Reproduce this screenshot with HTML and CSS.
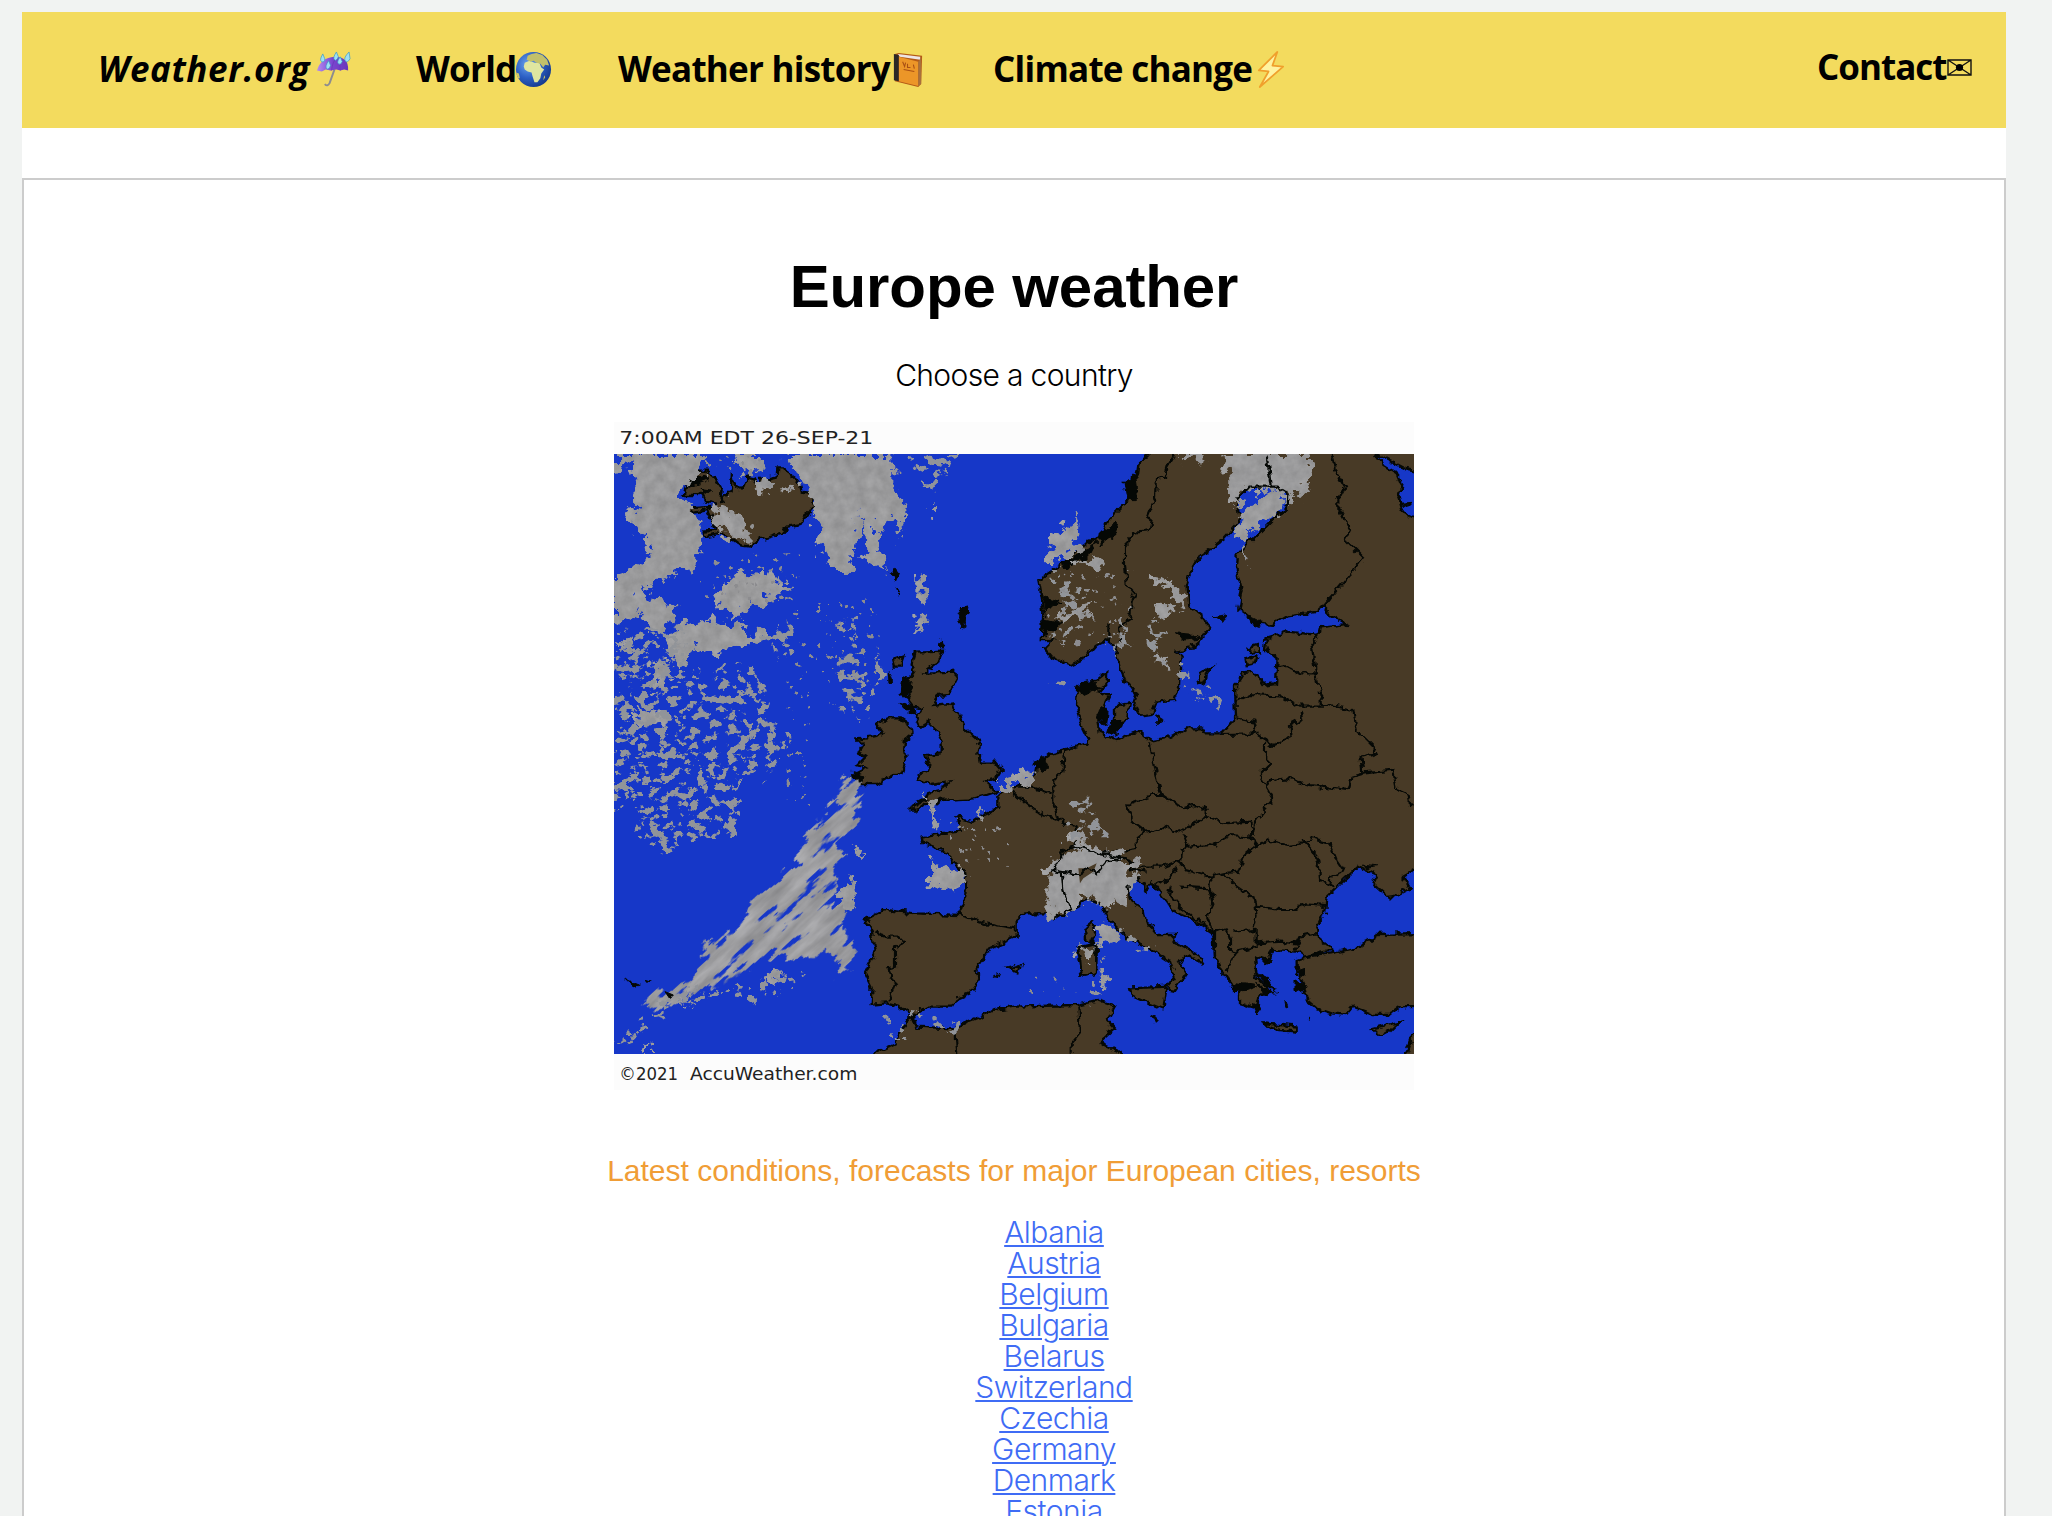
FILE: index.html
```html
<!DOCTYPE html>
<html lang="en">
<head>
<meta charset="utf-8">
<title>Europe weather</title>
<link rel="stylesheet" href="styles.css">
</head>
<body>
<div class="page">
  <nav class="nav">
    <a class="nav-item brand"><span class="t t-brand">Weather.org</span><svg class="emoji" viewBox="0 0 38 38"><defs><linearGradient id="um" x1="0" x2="1"><stop offset="0" stop-color="#b58cf0"/><stop offset=".5" stop-color="#7a45cf"/><stop offset="1" stop-color="#6a35bb"/></linearGradient></defs><path d="M20 19l-5 14q-2 4-5 1" fill="none" stroke="#8c8c90" stroke-width="2"/><path d="M2 20Q6 7 20 6Q35 6 34 20l-4-1-4 1-4-1-6 1-5-1-4 2z" fill="url(#um)"/><path d="M17 20q1-9 5-13 4 4 4 13" fill="none" stroke="#6a38b8" stroke-width=".8"/><g fill="#9fe0f4" stroke="#3799c9" stroke-width=".7"><path d="M8 3q-4 7-1 8t3-3zM22 1q-4 6-2 8t4-3zM14 10q-4 6-2 8t4-3zM26 6q-4 5-2 7t4-2zM35 1q-6 6-4 9t5-2z"/></g></svg></a>
    <a class="nav-item"><span class="t t-world">World</span><svg class="emoji" viewBox="0 0 38 38"><defs><radialGradient id="gl" cx=".35" cy=".35" r=".7"><stop offset="0" stop-color="#6aa5ee"/><stop offset=".55" stop-color="#2c5fc4"/><stop offset="1" stop-color="#163a8e"/></radialGradient></defs><circle cx="19" cy="19" r="18" fill="url(#gl)"/><path d="M9 16l1-4 5-2 5 2 5 0 2 5 3 2-3 4-1 5-3 4-3 0-2-6-1-4-4-1-3-2z" fill="#dfe6a0"/><path d="M12 9l1-4 4-2 5-1 6 2 5 5 2 6-4-1-2 3-3-4-4-1-3-2-3 1z" fill="#c2c06a"/><path d="M1 22l3 1 1 5-2 0zM30 25l1 2-2 3z" fill="#c9c768"/></svg></a>
    <a class="nav-item"><span class="t t-history">Weather history</span><svg class="emoji" viewBox="0 0 38 38"><path d="M5 3l4-1 24 3-1 29-3 3L5 31z" fill="#b35a16"/><path d="M8 3l23 3v3L10 6z" fill="#eee6e4"/><path d="M9 6l20 5v25L9 31z" fill="#ec9628"/><path d="M4 3l5 1v27l-5-1z" fill="#2b2826"/><path d="M29 11l3-4v27l-3 2z" fill="#a8703c"/><path d="M13 11l2 5 1-4m2 1v4h3m3-3l1 4m-11 1l11 2" fill="none" stroke="#a84f14" stroke-width="1.1"/></svg></a>
    <a class="nav-item"><span class="t t-climate">Climate change</span><svg class="emoji" viewBox="0 0 38 38"><path d="M26 1L7 20l10 1L8 37 32 16l-11-1z" fill="#fff3a0" stroke="#f0a02c" stroke-width="1.8" stroke-linejoin="round"/></svg></a>
    <a class="nav-item contact"><span class="t t-contact">Contact</span><svg class="mail" viewBox="0 0 25 17"><path d="M1 1h23v15H1zM1 1l23 15M24 1L1 16" fill="none" stroke="#111" stroke-width="1.4"/><circle cx="12.500" cy="8.500" r="3.600"/></svg></a>
  </nav>
  <main class="card">
    <h1>Europe weather</h1>
    <p class="lead">Choose a country</p>
    <svg class="map" viewBox="42 36 2400 2004" preserveAspectRatio="none">
      <defs>
        <clipPath id="frame"><rect x="42" y="132" width="2400" height="1800"/></clipPath>
        <filter id="rough" filterUnits="userSpaceOnUse" x="0" y="90" width="2490" height="1890"><feTurbulence type="fractalNoise" baseFrequency=".045" numOctaves="2" seed="4"/><feDisplacementMap in="SourceGraphic" scale="26" xChannelSelector="R" yChannelSelector="G"/></filter>
        <filter id="ragged" filterUnits="userSpaceOnUse" x="0" y="90" width="2490" height="1890"><feTurbulence type="fractalNoise" baseFrequency=".03" numOctaves="4" seed="9" result="n"/><feDisplacementMap in="SourceGraphic" in2="n" scale="80" xChannelSelector="R" yChannelSelector="G" result="d"/><feColorMatrix in="n" values=".13 0 0 0 .54 .13 0 0 0 .54 .13 0 0 0 .545 0 0 0 0 1"/><feComposite in2="d" operator="in"/></filter>
        <filter id="streak" filterUnits="userSpaceOnUse" x="-900" y="-900" width="3800" height="3800"><feTurbulence type="fractalNoise" baseFrequency=".008 .035" numOctaves="4" seed="5" result="n"/><feDisplacementMap in="SourceGraphic" in2="n" scale="90" xChannelSelector="R" yChannelSelector="G" result="d"/><feColorMatrix in="n" values=".22 0 0 0 .5 .22 0 0 0 .5 .22 0 0 0 .51 0 16 0 0 -4.900"/><feComposite in2="d" operator="in"/></filter>
        <filter id="speckle" filterUnits="userSpaceOnUse" x="0" y="90" width="2490" height="1890"><feTurbulence type="fractalNoise" baseFrequency=".034 .042" numOctaves="4" seed="12" result="n"/><feTurbulence type="fractalNoise" baseFrequency=".012" numOctaves="3" seed="31" result="w"/><feDisplacementMap in="SourceGraphic" in2="w" scale="150" xChannelSelector="R" yChannelSelector="G" result="d"/><feColorMatrix in="n" values="0 0 0 0 .57 0 0 0 0 .58 0 0 0 0 .6 20 0 0 0 -10.800"/><feComposite in2="d" operator="in"/></filter>
        <filter id="dots" filterUnits="userSpaceOnUse" x="0" y="90" width="2490" height="1890"><feTurbulence type="fractalNoise" baseFrequency=".045" numOctaves="3" seed="23"/><feColorMatrix values="0 0 0 0 .55 0 0 0 0 .55 0 0 0 0 .56 24 0 0 0 -16.800"/><feComposite in2="SourceGraphic" operator="in"/></filter>
      </defs>
      <rect class="band" x="42" y="36" width="2400" height="2004"/>
      <rect class="sea" x="42" y="132" width="2400" height="1800"/>
      <g clip-path="url(#frame)">
        <g class="land" filter="url(#rough)">
          <path d="M250 255L260 225 290 182 320 182 345 205 365 240 360 285 375 255 392 245 395 205 410 230 425 238 440 200 460 205 475 235 480 210 530 200 532 172 552 172 560 190 585 205 600 225 605 245 640 250 645 285 630 300 605 342 560 350 540 372 480 390 455 410 420 405 385 378 355 370 310 380 308 362 345 360 335 330 320 300 262 312 262 295 345 290 345 280 320 275 310 255Z"/>
          <path d="M945 725L1025 722 1010 760 975 788 1070 785 1070 805 1045 855 1010 858 1000 885 1045 880 1080 910 1090 950 1130 985 1140 1010 1135 1030 1140 1055 1185 1055 1205 1080 1190 1105 1155 1115 1190 1145 1160 1155 1120 1165 1020 1170 1000 1185 970 1185 950 1202 935 1202 935 1190 975 1170 985 1145 1030 1135 1050 1115 1000 1125 950 1110 955 1095 980 1080 985 1065 975 1035 1025 1030 1025 995 1005 955 985 935 960 950 948 925 965 895 940 890 925 870 935 850 920 820 940 790 935 760Z"/>
          <path d="M770 985L830 978 850 970 830 940 860 925 900 925 930 945 935 975 915 990 912 1020 918 1050 905 1090 870 1100 830 1125 770 1125 760 1095 800 1075 770 1065 795 1040 775 1030 790 1005Z"/>
          <path d="M1645 100L1645 132 1615 165 1610 200 1580 215 1605 245 1580 275 1530 325 1500 385 1460 400 1380 465 1315 510 1325 560 1330 610 1325 690 1360 690 1335 715 1360 745 1410 765 1455 745 1490 705 1520 690 1545 710 1560 770 1575 810 1608 855 1600 880 1620 920 1655 915 1670 875 1720 870 1740 830 1745 740 1730 722 1775 715 1805 690 1830 650 1810 625 1765 590 1760 530 1775 475 1800 440 1870 390 1920 335 1910 270 1945 230 2030 230 2062 250 2060 300 2020 325 1950 395 1910 440 1908 470 1925 540 1915 600 1970 640 2020 645 2060 620 2150 605 2170 590 2185 610 2240 645 2160 655 2155 675 2065 665 2000 685 1995 715 2030 745 2025 820 1990 825 1965 785 1930 790 1905 830 1908 920 1865 970 1820 970 1810 955 1760 955 1720 980 1650 992 1620 965 1580 975 1550 990 1500 970 1495 930 1530 860 1495 850 1520 820 1522 785 1485 815 1435 825 1430 900 1445 950 1465 990 1460 1000 1395 1020 1355 1030 1310 1065 1305 1090 1280 1115 1235 1135 1195 1155 1195 1195 1150 1215 1120 1235 1070 1222 1080 1265 1020 1270 965 1280 970 1300 1040 1325 1065 1360 1100 1390 1095 1470 1080 1515 950 1510 850 1500 795 1530 815 1560 825 1630 795 1690 815 1730 812 1785 860 1780 900 1790 935 1818 980 1790 1060 1790 1075 1765 1110 1750 1140 1705 1125 1680 1170 1615 1250 1580 1250 1530 1275 1510 1340 1510 1365 1525 1415 1495 1465 1468 1505 1485 1525 1530 1575 1580 1640 1610 1710 1655 1725 1700 1700 1735 1725 1740 1760 1690 1740 1660 1755 1635 1805 1660 1810 1645 1720 1595 1725 1575 1675 1575 1640 1535 1635 1505 1590 1470 1585 1420 1615 1400 1640 1440 1655 1415 1680 1450 1720 1505 1780 1530 1840 1570 1845 1640 1865 1680 1895 1720 1920 1735 1920 1780 1970 1795 1980 1750 2020 1750 1970 1700 1965 1640 2000 1650 2020 1620 2090 1625 2110 1640 2200 1620 2155 1585 2150 1550 2175 1510 2180 1460 2220 1420 2275 1370 2330 1395 2320 1420 2370 1465 2430 1435 2410 1400 2480 1360 2480 100Z"/>
          <path d="M2480 1572L2330 1575 2280 1610 2210 1628 2120 1640 2090 1650 2090 1680 2110 1720 2120 1770 2150 1795 2195 1810 2240 1815 2260 1790 2320 1812 2370 1812 2400 1792 2480 1790Z"/>
          <path d="M800 1960L820 1931 885 1900 905 1860 935 1818 950 1850 1060 1855 1135 1825 1180 1800 1245 1790 1430 1785 1495 1770 1545 1788 1522 1830 1545 1855 1500 1895 1520 1910 1565 1931 1580 1960ZM1590 1735L1700 1730 1690 1795 1640 1775 1595 1755ZM1430 1615L1490 1605 1488 1690 1445 1700 1440 1645ZM1455 1555L1480 1535 1485 1570 1475 1600 1458 1590ZM1995 1840L2040 1845 2090 1850 2090 1865 2040 1860 2000 1850ZM2315 1855L2400 1835 2370 1865 2335 1875ZM1222 1675L1262 1665 1255 1688ZM1545 890L1590 880 1580 930 1545 935ZM1795 795L1835 770 1805 825ZM1940 715L1975 705 1980 725 1950 730ZM1937 748L1970 740 1965 760 1940 765ZM1672 920L1688 930 1672 940ZM880 750L910 740 900 770 885 770ZM2410 1950L2430 1890 2460 1860V1950Z"/>
          <path class="sea" d="M2330 132L2350 165 2390 190 2405 225 2395 260 2410 310 2480 345V190L2415 175Z"/>
        </g>
        <g class="rock" filter="url(#rough)">
          <path d="M868 488l15-10 12 15-8 20zM885 530l14 25-8-5zM1085 600l20-12-8 40-8 24-16-25zM1015 695l12-5 8 20-12 5zM865 785l10 30-8 5zM905 800l30 5-10 60-25-10zM900 880l40 10 10 30-20-10zM255 235l30-30 30-10 5 15-40 15zM300 235l35 5-20 15zM1430 825l30-10 50 15-30 10-35 15zM1500 890l25 10-5 40-30-15zM1530 935l40-5-20 50-30-15zM1330 560l50 15-45 25zM1325 630l60 10-50 35zM1380 460l60-25 50-40-20 40-70 40zM1500 370l50-30-10 35-40 30zM1575 215l25-20 10 70-25 10zM1720 668l60 5 20 12-50 5zM1840 620l38-5-15 22zM1948 620l30 15 5 15-30-10zM1300 1060l30-20 15 30-25 20zM760 1085l30 10 0 30-30-15zM1180 1700l16-10-8 20zM1655 1818l14 5-6 14zM1970 1690l30 15 30 40-30-20zM1975 1640l40 10-20 15zM1970 1720l50 30-20 10zM1900 1720l70 10-20 10-50 5zM2085 1710l40 20-40 15zM2085 1690l30-10 5 15zM2055 1770l8 20-6 5zM1960 1780l25 15-15 20zM1855 1670l14 8-6 14zM1890 1725l20 10-6 10zM2290 1365l40 5-30 5zM2400 280l30-3v14zM80 1710l38 15-15 5zM138 1708l16 5-14 4zM2122 1835l8-15"/>
        </g>
        <g class="border" filter="url(#rough)">
          <path d="M1725 132L1705 165 1695 200 1668 205 1665 260 1640 320 1655 330 1650 360 1605 365 1575 405 1575 470 1580 520 1605 550 1595 575 1590 630 1560 650 1565 705M1525 690L1525 640M2005 132L2012 150 2000 180 2012 225M2195 132L2205 180 2235 230 2215 270 2215 295 2250 360 2235 390 2290 445 2170 590M2155 675L2135 710 2148 790 2165 870 2165 890 2100 890 2050 860 1950 855 1905 875M2148 790L2095 790 2060 765 2030 768M2165 880L2260 900 2270 960 2320 1010 2330 1030 2285 1040 2290 1090 2255 1100 2245 1140 2130 1125 2060 1105 2015 1110 2000 1125M2105 900L2110 925 2070 945 2075 980 2020 1005 1965 970 1860 972M1910 925L1960 935 1970 970M1995 995L1995 1040 2015 1060 1980 1095 2000 1130 2020 1165 1975 1220 1965 1250 1960 1275M2290 1090L2380 1082 2390 1135 2425 1150 2430 1185 2460 1190M1650 1000L1660 1060 1670 1110 1685 1155M1655 1155L1590 1180 1580 1190 1600 1235 1640 1265 1690 1250 1740 1265 1820 1220 1820 1200 1780 1185 1750 1195 1690 1155ZM1820 1220L1850 1230 1870 1240 1950 1235 1960 1255 1950 1280 1890 1275 1840 1305 1765 1310 1750 1270M1950 1280L1970 1305 1930 1340 1915 1385 1870 1390 1830 1400 1760 1380 1740 1350 1745 1315 1765 1310M1640 1265L1610 1290 1610 1320 1530 1330 1430 1310M1740 1350L1690 1370 1615 1370 1575 1345 1520 1370M1970 1305L2000 1290 2060 1305 2110 1300 2140 1285 2190 1300 2210 1350 2230 1380 2195 1395 2190 1430M2110 1290L2155 1345 2160 1410 2200 1430M1735 1370L1705 1410 1660 1425M1870 1390L1910 1430 1940 1450 1960 1460 1970 1490 2040 1500 2080 1500 2120 1480 2175 1485M1735 1430L1830 1435 1840 1480 1820 1520 1840 1570 1880 1555 1890 1590 1890 1620 1910 1625 1970 1610 1970 1560 1900 1565M1715 1430L1710 1455 1750 1500 1810 1540M1965 1470L1970 1520 1960 1555M1970 1600L2040 1595 2090 1600 2100 1580 2150 1570M1910 1625L1880 1680M1845 1570L1845 1640M1830 1400L1835 1460M2100 1590L2085 1620M1395 1020L1390 1080 1360 1110 1360 1180 1375 1230 1430 1255 1430 1300 1390 1325 1360 1380 1385 1400 1440 1395 1460 1370 1490 1390 1520 1355 1580 1345M1235 1145L1300 1200 1350 1220 1375 1230M1240 1130L1290 1130 1355 1150M1585 1345L1590 1375 1640 1385M1080 1515L1160 1540 1245 1555M825 1570L860 1580 900 1580 915 1595 885 1615 885 1670 865 1675 885 1720 865 1775M1065 1855L1072 1931M1435 1790L1440 1870 1415 1900 1415 1931"/>
        </g>
        <g filter="url(#ragged)">
          <path d="M42 132H310L280 200 240 260 300 330 310 400 270 480 200 500 120 540 220 600 215 640 160 665 120 610 42 650V490L130 460 150 410 90 330 110 230 100 160 42 170Z"/>
          <path d="M415 132H490L480 190 420 195ZM560 132H880L880 230 920 300 915 340 870 330 830 340 855 480 800 450 780 310 755 480 690 480 655 370 640 270 600 210ZM420 485L510 490 565 520 560 550 440 590 430 635 390 620 350 585 360 540ZM250 640L350 630 450 670 560 660 470 700 380 725 280 715 240 790 195 710ZM325 300L380 290 440 340 440 395 390 385 345 345ZM450 215l50-15 10 30-25 20zM540 240l40-15 5 15-30 10z"/>
          <path d="M42 690l60 10 20 30-60-20zM150 760l50 10-10 70-30 5zM100 910l100-10 20 40-100 10zM985 300l20 0 0 30-20 0zM955 490l18 0 8 90-26-5zM955 620l18 0-10 60-8 0z"/>
          <path d="M740 1405l25 10-10 90-50-10zM745 1310l50 20-15 15zM480 1700l70-10-20 30zM260 1770l40-5-10 20zM130 1910l30 0v22h-30zM990 1350l70 30 40 10-30 60-80-20zM970 1150l30 20 18 85-15 0-15-60zM1130 1180l15 0 0 50-12 0zM1200 1110l70-30 40 10-60 40-50 10z"/>
          <path d="M1340 445L1348 395 1400 350 1420 310 1435 320 1435 370 1420 430 1370 460ZM1420 440l70 10 20 25-20 10-40-20zM1870 132H2120L2145 180 2120 230 2070 280 2050 250 1940 225 1910 300 1885 270ZM1990 240L2050 250 2050 300 1990 330 1930 400 1900 370 1930 320ZM1730 132h80l-10 35-25-20-20 10zM1380 620l60-30 50-5-40 25-75 35zM1650 500l50 10 40 30 10 60-20-10-20-50-60-25zM1660 590l50-5 20 25-60 15zM1670 720l40 40-15 15-25-20z"/>
          <path d="M1345 1390L1370 1340 1440 1310 1560 1330 1615 1370 1600 1410 1585 1470 1530 1495 1470 1465 1370 1520 1345 1520ZM1415 1310l15-50 20 50zM1500 1540l60 15-20 40-55 20zM1430 1610l60-5-10 60-40-20zM1500 1690l30 10-20 40z"/>
        </g>
        <g transform="rotate(-43 600 1500)" filter="url(#streak)">
          <g transform="rotate(43 600 1500)"><path d="M750 1105L785 1120 790 1190 765 1210 760 1260 710 1280 715 1330 750 1350 700 1380 710 1500 755 1580 755 1690 715 1700 680 1630 620 1650 520 1640 390 1700 270 1760 130 1810 150 1770 270 1710 310 1620 420 1540 460 1480 560 1380 620 1370 610 1300 650 1240 700 1200 720 1150Z"/></g>
        </g>
        <path class="rock" d="M195 1745l25 10-10 12z"/>
        <path class="alps" d="M1435 1375l25 0 30-15-10 25-30 20-10 15z"/>
        <g filter="url(#speckle)">
          <path d="M42 840L330 810 400 760 500 800 500 900 560 960 550 1030 500 1080 430 1160 400 1250 330 1300 180 1300 100 1240 42 1170Z"/>
          <path d="M42 650h220v180H42zM500 650l70-20 10 80-60 20zM735 650h30l15 270h-40zM810 730h25l-5 150h-20zM180 1770L380 1710 570 1710 560 1760 300 1790 160 1820ZM60 1870l60-30v30l-50 20zM870 330l50 0-30 70zM950 132h90l-40 120h-50zM1340 500l90 0 20 90-80 20zM1350 660l60-20 30 40-60 20zM1530 650l60 20 10 40-60-5zM1640 640l40 0 0 80-40 0zM1700 760l40 20 10 50-50-10zM1770 800l60 30 20 60-70-20zM1940 410l30 30-5 60-20-40zM1350 800l50 10v30l-50-20zM1400 1190l80 0 40 110-80 0-50-40zM1540 1560l100 20 20 40-80-10zM1440 1700l40 10 30 50-60-10zM880 1830h40l-20 30h-20zM990 1810h90v40h-80z"/>
        </g>
        <g filter="url(#dots)">
          <path d="M300 430h300v150H300zM560 560h280v260H560zM1050 1220h190v150h-190zM1280 1700h150v60h-150zM560 700h70v500h-70zM300 130h200v80H300zM1340 480h260v230h-260z"/>
        </g>
        <g class="border" filter="url(#rough)"><path d="M1910 270L1945 230 2030 230 2062 250 2060 300 2020 325 1950 395M2000 140L2012 225M1385 1385L1390 1440 1400 1470 1410 1495 1365 1525M1585 1420L1590 1470M1430 1310L1390 1325 1360 1380 1440 1395 1460 1370 1490 1390 1520 1355 1570 1345M1430 1310L1500 1330 1580 1345M1430 1615L1490 1605 1488 1690 1445 1700Z"/></g>
      </g>
      <text class="stamp" x="58" y="101" textLength="762" lengthAdjust="spacingAndGlyphs">7:00AM EDT 26-SEP-21</text>
      <text class="stamp" x="58" y="2010" textLength="176" lengthAdjust="spacingAndGlyphs">©2021</text>
      <text class="stamp" x="270" y="2010" textLength="502" lengthAdjust="spacingAndGlyphs">AccuWeather.com</text>
    </svg>
    <p class="latest">Latest conditions, forecasts for major European cities, resorts</p>
    <ul class="countries">
      <li><a href="#">Albania</a></li>
      <li><a href="#">Austria</a></li>
      <li><a href="#">Belgium</a></li>
      <li><a href="#">Bulgaria</a></li>
      <li><a href="#">Belarus</a></li>
      <li><a href="#">Switzerland</a></li>
      <li><a href="#">Czechia</a></li>
      <li><a href="#">Germany</a></li>
      <li><a href="#">Denmark</a></li>
      <li><a href="#">Estonia</a></li>
    </ul>
  </main>
</div>
</body>
</html>
```
FILE: styles.css
```css
* { box-sizing: border-box; }
html { background: #f1f3f2; }
body {
  margin: 0;
  height: 1516px;
  overflow: hidden;
  font-family: "Liberation Sans", Arial, sans-serif;
  color: #000;
}
.page {
  width: 1984px;
  height: 1504px;
  margin: 12px 0 0 22px;
  background: #fff;
  overflow: hidden;
}
.nav {
  height: 116px;
  padding: 0 34px 2px 76px;
  display: flex;
  align-items: center;
  background: #f3db5e;
  font: 700 35px/46px "Open Sans", "Noto Sans", sans-serif;
  letter-spacing: -.75px;
}
.nav-item { display: flex; align-items: center; margin-right: 66px; white-space: nowrap; }
.t { display: block; }
.t-brand { width: 217px; font-style: italic; letter-spacing: .6px; }
.t-world { width: 99px; }
.t-history { width: 272px; }
.t-climate { width: 259px; }
.t-contact { width: 130px; letter-spacing: -1px; }
.brand { margin-right: 64px; }
.contact { margin: 0 0 4px auto; }
.emoji { width: 37px; height: 37px; }
.mail { width: 25px; height: 17px; }
.card {
  height: 1500px;
  margin-top: 50px;
  padding-top: 72px;
  border: 2px solid #ccc;
  text-align: center;
}
h1 { margin: 0; font-size: 60px; line-height: 70px; letter-spacing: -.1px; }
.lead { margin: 35px 0 0; font: 300 30px/36px Inter, sans-serif; letter-spacing: -.65px; }
.map { display: block; width: 800px; height: 668px; margin: 29px auto 0; color-interpolation-filters: sRGB; }
.band { fill: #fcfcfc; }
.sea, .land .sea { fill: #1637c8; }
.land { fill: #483a26; stroke: #050805; stroke-width: 7; }
.alps { fill: #483a26; }
.rock { fill: #050805; stroke: #050805; stroke-width: 3; }
.border { fill: none; stroke: #050805; stroke-width: 6.5; }
.stamp { font: 54px "DejaVu Sans", sans-serif; fill: #222; }
.latest { margin: 64px 0 0; font-size: 30px; line-height: 34px; color: #f09d36; }
.countries {
  margin: 29px 0 0;
  padding: 0 0 0 80px;
  list-style: none;
  font: 300 30px/31px Inter, sans-serif;
  letter-spacing: -.5px;
}
.countries a { color: #3f6cf5; text-decoration-thickness: 2px; text-underline-offset: 2px; }
```
